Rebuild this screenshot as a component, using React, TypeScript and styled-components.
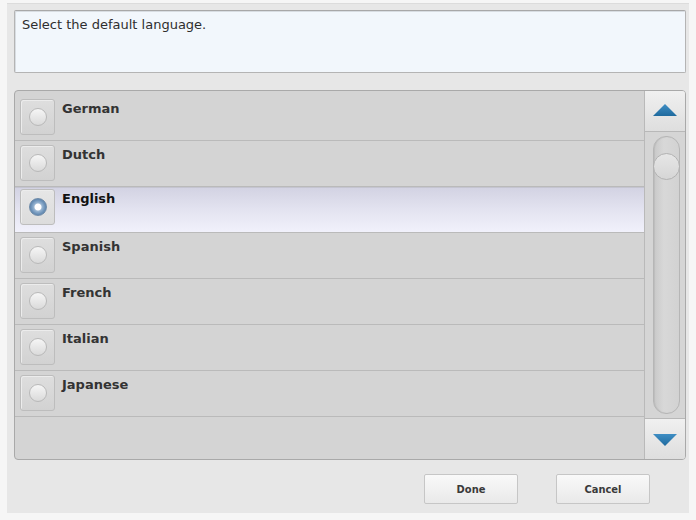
import styled, { createGlobalStyle } from "styled-components";
import { useState } from "react";

const languages = [
  "German",
  "Dutch",
  "English",
  "Spanish",
  "French",
  "Italian",
  "Japanese",
];

const GlobalStyle = createGlobalStyle`
  html, body {
    margin: 0;
    padding: 0;
    background: #f6f6f6;
  }
  body {
    font-family: "DejaVu Sans", Verdana, sans-serif;
  }
`;

const App = () => {
  const [selected, setSelected] = useState("English");

  return (
    <>
      <GlobalStyle />
      <Dialog>
        <Prompt>Select the default language.</Prompt>
        <ListPanel>
          <Rows>
            {languages.map((lang) => (
              <Row
                key={lang}
                $active={lang === selected}
                onClick={() => setSelected(lang)}
              >
                <RadioBox $active={lang === selected}>
                  <RadioDot $active={lang === selected} />
                </RadioBox>
                <Label $active={lang === selected}>{lang}</Label>
              </Row>
            ))}
            <Filler />
          </Rows>
          <ScrollBar>
            <ScrollButton $dir="up">
              <Arrow viewBox="0 0 24 12" $dir="up">
                <defs>
                  <linearGradient id="arrowUp" x1="0" y1="0" x2="0" y2="1">
                    <stop offset="0" stopColor="#3f8ec4" />
                    <stop offset="1" stopColor="#1f6a9e" />
                  </linearGradient>
                </defs>
                <polygon points="12,0 24,12 0,12" fill="url(#arrowUp)" />
              </Arrow>
            </ScrollButton>
            <Track>
              <Groove>
                <Thumb />
              </Groove>
            </Track>
            <ScrollButton $dir="down">
              <Arrow viewBox="0 0 24 12" $dir="down">
                <defs>
                  <linearGradient id="arrowDown" x1="0" y1="0" x2="0" y2="1">
                    <stop offset="0" stopColor="#3f8ec4" />
                    <stop offset="1" stopColor="#1f6a9e" />
                  </linearGradient>
                </defs>
                <polygon points="0,0 24,0 12,12" fill="url(#arrowDown)" />
              </Arrow>
            </ScrollButton>
          </ScrollBar>
        </ListPanel>
        <Footer>
          <ActionButton>Done</ActionButton>
          <ActionButton>Cancel</ActionButton>
        </Footer>
      </Dialog>
    </>
  );
};

export default App;

const Dialog = styled.div`
  box-sizing: border-box;
  margin: 3px 0 0 7px;
  width: 682px;
  height: 510px;
  background: #e7e7e7;
  border-top: 1px solid #dcdcdc;
  padding: 6px 3px 0 7px;
  display: flex;
  flex-direction: column;
`;

const Prompt = styled.div`
  box-sizing: border-box;
  height: 63px;
  background: #f2f7fc;
  border: 1px solid #b4b4b4;
  border-top-color: #a8a8a8;
  border-radius: 2px;
  box-shadow: inset 1px 1px 0 #d8dde2;
  padding: 6px 0 0 7px;
  font-size: 13px;
  color: #2e2e2e;
`;

const ListPanel = styled.div`
  box-sizing: border-box;
  margin-top: 17px;
  height: 370px;
  display: flex;
  border: 1px solid #a9a9a9;
  border-radius: 4px;
  background: #d4d4d4;
  overflow: hidden;
`;

const Rows = styled.div`
  flex: 1;
  display: flex;
  flex-direction: column;
  padding-top: 4px;
  border-right: 1px solid #b9b9b9;
`;

const Row = styled.div<{ $active: boolean }>`
  box-sizing: border-box;
  height: 46px;
  display: flex;
  align-items: flex-start;
  padding-left: 5px;
  border-bottom: 1px solid #bababa;
  background: ${(p) =>
    p.$active
      ? "linear-gradient(to bottom, #d2d2e2 0%, #e3e3f0 50%, #f1f1fb 100%)"
      : "#d4d4d4"};
  box-shadow: ${(p) => (p.$active ? "inset 0 1px 0 #c4c4d0" : "none")};
  cursor: pointer;
`;

const RadioBox = styled.div<{ $active: boolean }>`
  box-sizing: border-box;
  width: 35px;
  height: 36px;
  margin-top: ${(p) => (p.$active ? "2px" : "4px")};
  border: 1px solid #bdbdbd;
  border-radius: 3px;
  background: ${(p) =>
    p.$active
      ? "linear-gradient(to bottom, #e6e6e6, #dcdcdc)"
      : "linear-gradient(to bottom, #dedede, #d2d2d2)"};
  box-shadow: inset 1px 1px 0 #ececec;
  display: flex;
  align-items: center;
  justify-content: center;
`;

const RadioDot = styled.div<{ $active: boolean }>`
  box-sizing: border-box;
  width: 18px;
  height: 18px;
  border-radius: 50%;
  border: 1px solid ${(p) => (p.$active ? "#6d8aa8" : "#b9b9b9")};
  background: ${(p) =>
    p.$active
      ? "radial-gradient(circle at 50% 50%, #ffffff 0, #ffffff 3px, #9ab6d2 4px, #6b91b8 7px, #5a7fa6 9px)"
      : "linear-gradient(to bottom, #f6f6f6, #dadada)"};
`;

const Label = styled.span<{ $active: boolean }>`
  margin: ${(p) => (p.$active ? "4px" : "6px")} 0 0 7px;
  font-size: 13px;
  font-weight: bold;
  line-height: 16px;
  color: ${(p) => (p.$active ? "#111" : "#333")};
`;

const Filler = styled.div`
  flex: 1;
`;

const ScrollBar = styled.div`
  width: 40px;
  display: flex;
  flex-direction: column;
  background: #d6d6d6;
`;

const ScrollButton = styled.div<{ $dir: "up" | "down" }>`
  box-sizing: border-box;
  height: 41px;
  background: linear-gradient(to bottom, #f0f0f0, #dedede);
  border-${(p) => (p.$dir === "up" ? "bottom" : "top")}: 1px solid #b8b8b8;
  display: flex;
  align-items: center;
  justify-content: center;
`;

const Arrow = styled.svg<{ $dir: "up" | "down" }>`
  width: 24px;
  height: 12px;
  margin-top: ${(p) => (p.$dir === "up" ? "-2px" : "2px")};
`;

const Track = styled.div`
  flex: 1;
  display: flex;
  justify-content: center;
  padding: 4px 0 4px 2px;
  background: #d5d5d5;
`;

const Groove = styled.div`
  box-sizing: border-box;
  width: 27px;
  border: 1px solid #b6b6b6;
  border-radius: 13px;
  background: linear-gradient(to right, #c9c9c9, #d8d8d8 40%, #d2d2d2);
  box-shadow: inset 1px 0 1px #bdbdbd;
  padding-top: 16px;
  display: flex;
  justify-content: center;
`;

const Thumb = styled.div`
  box-sizing: border-box;
  width: 27px;
  height: 27px;
  margin: 0 -1px;
  border-radius: 50%;
  border: 1px solid #b2b2b2;
  background: linear-gradient(to bottom, #e6e6e6, #d6d6d6);
`;

const Footer = styled.div`
  display: flex;
  justify-content: flex-end;
  gap: 38px;
  padding: 14px 36px 0 0;
`;

const ActionButton = styled.button`
  box-sizing: border-box;
  width: 94px;
  height: 30px;
  border: 1px solid #c6c6c6;
  border-radius: 2px;
  background: linear-gradient(to bottom, #f9f9f9, #e9e9e9);
  font-family: "DejaVu Sans Condensed", "DejaVu Sans", sans-serif;
  font-stretch: condensed;
  font-size: 11px;
  font-weight: bold;
  color: #3a3a3a;
  padding: 0;
`;
